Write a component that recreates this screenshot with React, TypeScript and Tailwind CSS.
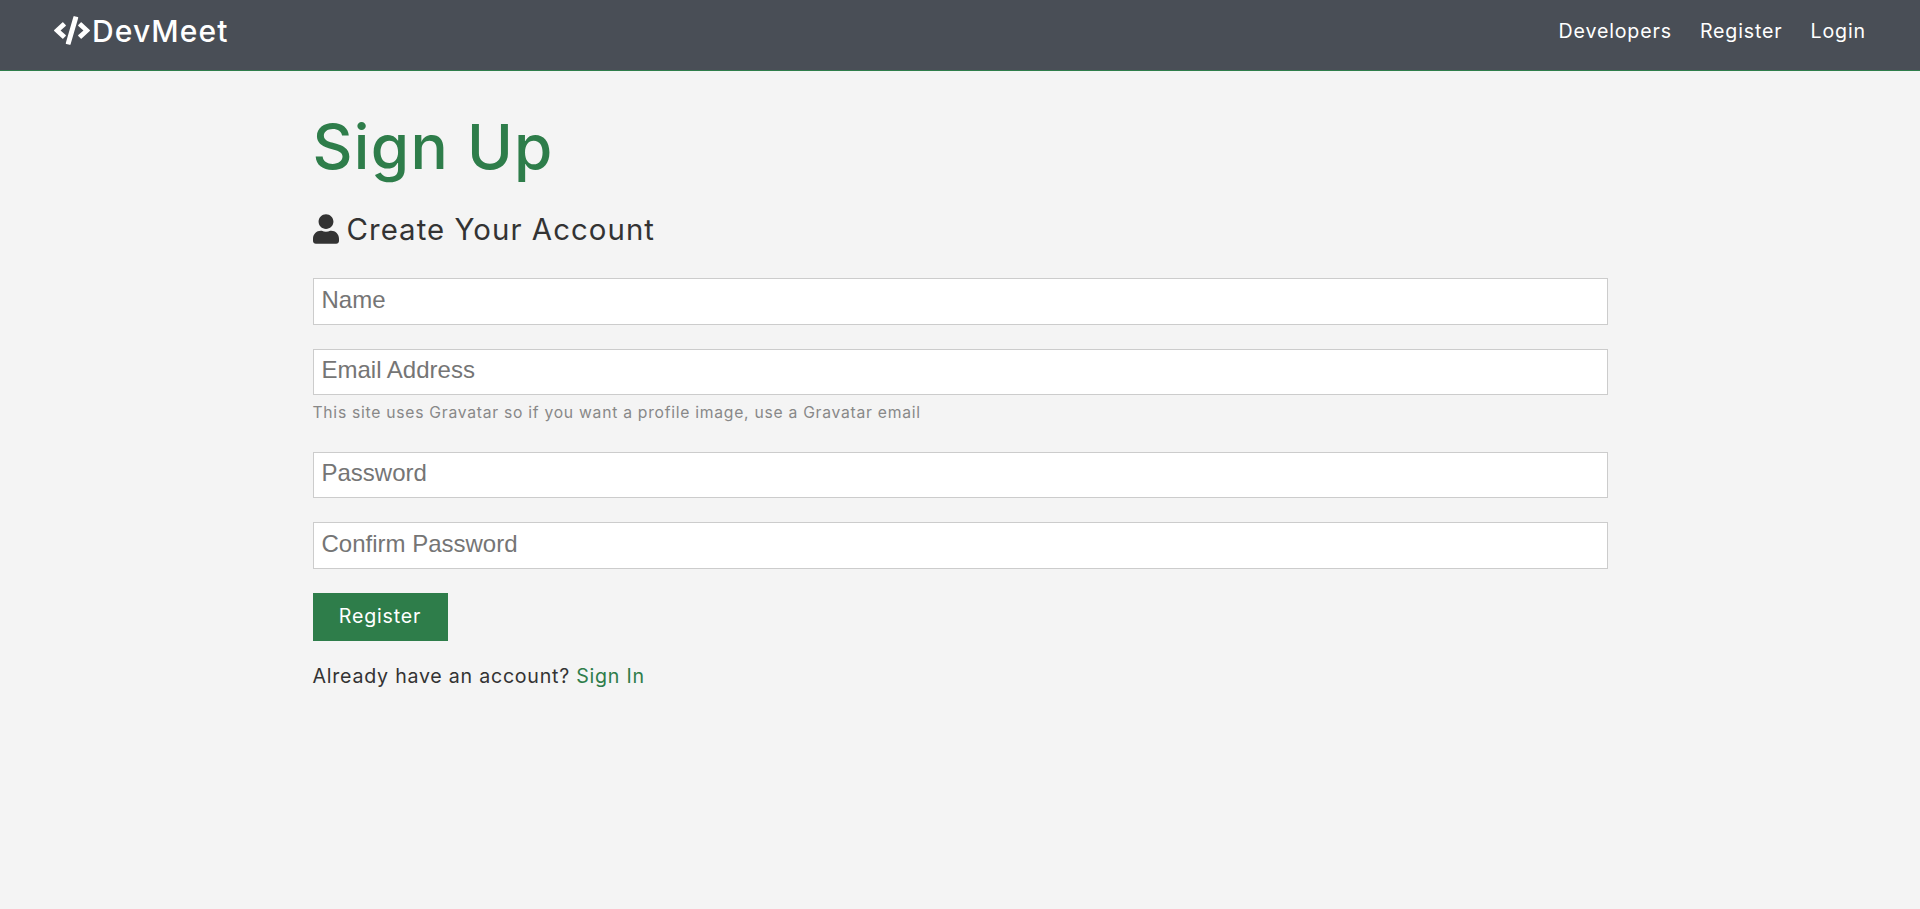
import { FaCode, FaUser } from "react-icons/fa";

const inputClass =
  "block w-full border border-[#cccccc] bg-white pl-[8px] pr-[8px] pb-[4px] text-[24px] text-[#333333] placeholder:text-[#757575] font-['Liberation_Sans',Arial,sans-serif] outline-none rounded-none";

export default function App() {
  return (
    <div className="min-h-[909px] bg-[#f4f4f4] text-[#333333] font-['Inter','Noto_Sans',sans-serif]">
      <nav className="flex h-[71px] items-center justify-between border-b border-[#2e7d4a] bg-[#494e56] pb-[7px] pl-[54px] pr-[54px] text-white">
        <a href="#" className="-mt-[2px] flex items-center gap-[2px] text-[30px] font-medium leading-none tracking-[1.1px]">
          <FaCode className="h-[29px] w-[36px]" />
          <span>DevMeet</span>
        </a>
        <ul className="flex items-center gap-[28px] text-[19.6px] tracking-[0.85px]">
          <li><a href="#">Developers</a></li>
          <li><a href="#">Register</a></li>
          <li><a href="#">Login</a></li>
        </ul>
      </nav>

      <main className="mx-auto w-[1295px] pt-[39px]">
        <h1 className="text-[62px] font-medium leading-[74px] text-[#2e7d4a] tracking-[1.3px]">Sign Up</h1>
        <p className="mt-[28px] flex items-center gap-[8px] text-[29.4px] leading-[35px] tracking-[1.05px]">
          <FaUser className="-mt-[2px] h-[30px] w-[26px]" />
          <span>Create Your Account</span>
        </p>

        <form className="mt-[31px] flex flex-col">
          <input className={`${inputClass} h-[47px]`} placeholder="Name" />
          <input className={`${inputClass} mt-[24px] h-[46px]`} placeholder="Email Address" />
          <p className="mt-[6px] h-[27px] text-[15.7px] leading-[24px] text-[#888888] tracking-[0.73px]">
            This site uses Gravatar so if you want a profile image, use a Gravatar email
          </p>
          <input className={`${inputClass} mt-[24px] h-[46px]`} placeholder="Password" />
          <input className={`${inputClass} mt-[24px] h-[47px]`} placeholder="Confirm Password" />
          <button
            type="button"
            className="mt-[24px] h-[48px] w-[135px] bg-[#2e7d4a] text-[19.6px] text-white tracking-[0.8px]"
          >
            Register
          </button>
        </form>

        <p className="mt-[22px] text-[19.6px] leading-[27px] tracking-[0.76px]">
          Already have an account? <a href="#" className="text-[#2e7d4a]">Sign In</a>
        </p>
      </main>
    </div>
  );
}
